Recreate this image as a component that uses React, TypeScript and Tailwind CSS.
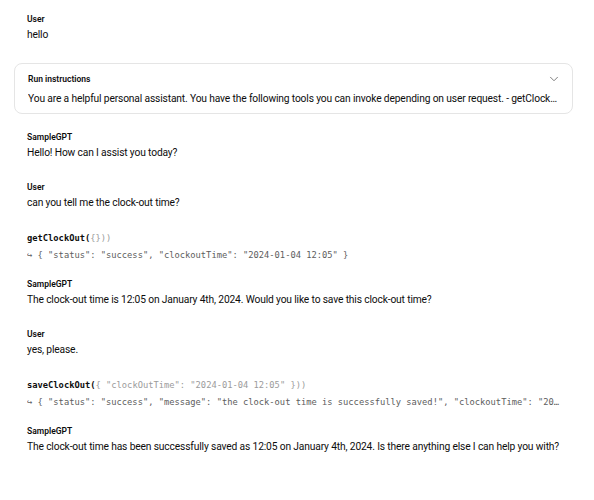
import { ChevronDown } from 'lucide-react'

const sans = { fontFamily: 'Roboto, "Noto Sans", sans-serif' }

function Label({ children }: { children: string }) {
  return <div className="text-[8.5px] font-semibold leading-4 text-[#0d0d0d]">{children}</div>
}

function Message({ role, text, className = '' }: { role: string; text: string; className?: string }) {
  return (
    <div className={className}>
      <Label>{role}</Label>
      <div className="text-[10.25px] leading-4 tracking-[-0.15px] text-[#0d0d0d]">{text}</div>
    </div>
  )
}

function ToolCall({ name, args, result, className = '' }: { name: string; args: string; result: string; className?: string }) {
  return (
    <div className={`font-['DejaVu_Sans_Mono',monospace] text-[8.75px] ${className}`}>
      <div className="leading-4 whitespace-nowrap">
        <span className="font-bold text-[#0d0d0d]">{name}(</span>
        <span className="text-[#9b9b9b]">{args}</span>
      </div>
      <div className="mt-px leading-4 text-[#5d5d5d] truncate">↪ {result}</div>
    </div>
  )
}

export default function App() {
  return (
    <div className="min-h-[500px] bg-white pl-[27px] pr-[34px] pt-[11px]" style={sans}>
      <Message role="User" text="hello" />

      {/* Run instructions card */}
      <div className="mt-5 -mx-[13px] rounded-lg border border-[#e5e5e5] px-[13px] pt-[7px] pb-[6px]">
        <div className="flex items-center justify-between">
          <Label>Run instructions</Label>
          <ChevronDown size={14} strokeWidth={1.5} className="mr-[-2px] text-[#6b6b6b]" />
        </div>
        <div className="mt-1 truncate text-[10.25px] leading-4 tracking-[-0.15px] text-[#0d0d0d]">
          You are a helpful personal assistant. You have the following tools you can invoke depending on user request. - getClockOut: get the clock-out time
        </div>
      </div>

      <Message className="mt-[15px]" role="SampleGPT" text="Hello! How can I assist you today?" />
      <Message className="mt-[18px]" role="User" text="can you tell me the clock-out time?" />
      <ToolCall
        className="mt-[19px]"
        name="getClockOut"
        args="{}))"
        result={'{ "status": "success", "clockoutTime": "2024-01-04 12:05" }'}
      />
      <Message
        className="mt-[13px]"
        role="SampleGPT"
        text="The clock-out time is 12:05 on January 4th, 2024. Would you like to save this clock-out time?"
      />
      <Message className="mt-[18px]" role="User" text="yes, please." />
      <ToolCall
        className="mt-[19px]"
        name="saveClockOut"
        args={'{ "clockOutTime": "2024-01-04 12:05" }))'}
        result={'{ "status": "success", "message": "the clock-out time is successfully saved!", "clockoutTime": "2024-01-04 12:05" }'}
      />
      <Message
        className="mt-[13px]"
        role="SampleGPT"
        text="The clock-out time has been successfully saved as 12:05 on January 4th, 2024. Is there anything else I can help you with?"
      />
    </div>
  )
}
